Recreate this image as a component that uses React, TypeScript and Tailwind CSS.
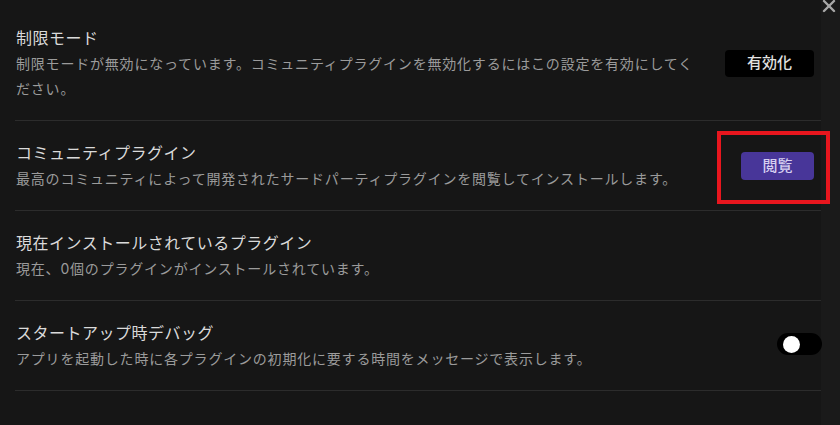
const FONT = "font-['Inter','Noto_Sans_CJK_JP',sans-serif]"

type Row = {
  name: string
  desc: string
  control: 'enable' | 'browse' | 'none' | 'toggle'
}

const ROWS: Row[] = [
  {
    name: '制限モード',
    desc: '制限モードが無効になっています。コミュニティプラグインを無効化するにはこの設定を有効にしてください。',
    control: 'enable',
  },
  {
    name: 'コミュニティプラグイン',
    desc: '最高のコミュニティによって開発されたサードパーティプラグインを閲覧してインストールします。',
    control: 'browse',
  },
  {
    name: '現在インストールされているプラグイン',
    desc: '現在、0個のプラグインがインストールされています。',
    control: 'none',
  },
  {
    name: 'スタートアップ時デバッグ',
    desc: 'アプリを起動した時に各プラグインの初期化に要する時間をメッセージで表示します。',
    control: 'toggle',
  },
]

function Control({ kind }: { kind: Row['control'] }) {
  if (kind === 'enable') {
    return (
      <button className="mr-[7px] h-[27px] w-[89px] rounded-[4px] bg-black text-[15px] font-medium text-[#e2e2e2]">
        有効化
      </button>
    )
  }
  if (kind === 'browse') {
    return (
      <div className="relative mr-[7px]">
        <button className="h-[28px] w-[73px] rounded-[4px] bg-[#483699] text-[15px] font-medium text-[#d6cff0]">
          閲覧
        </button>
        {/* annotation frame */}
        <div className="pointer-events-none absolute left-[-24px] top-[-21px] h-[73px] w-[113px] border-[4px] border-[#e8161e]" />
      </div>
    )
  }
  if (kind === 'toggle') {
    return (
      <div className="mr-[-1px] mt-[-4px] flex h-[22px] w-[45px] items-center rounded-full bg-black pl-[6px]">
        <span className="h-[17px] w-[17px] rounded-full bg-white" />
      </div>
    )
  }
  return null
}

export default function App() {
  return (
    <div className={`relative flex h-[425px] w-[840px] overflow-hidden bg-[#1a1a1a] ${FONT}`}>
      <main className="w-[821px] bg-[#161616] pl-[15px] pt-[6px]">
        {ROWS.map((r) => (
          <div key={r.name} className="flex items-center gap-5 border-b border-[#2c2c2c] pb-[19px] pt-5">
            <div className="flex-1 pl-px">
              <div className="text-[16px] leading-[25px] tracking-[0.5px] text-[#dadada]">{r.name}</div>
              <div className="max-w-[684px] text-[14px] leading-[25px] tracking-[0.8px] text-[#9b9b9b]">{r.desc}</div>
            </div>
            <Control kind={r.control} />
          </div>
        ))}
      </main>
      <div className="flex-1" />

      {/* close */}
      <svg className="absolute right-[4px] top-[-1px] h-[14px] w-[14px] text-[#a8a8a8]" viewBox="0 0 14 14" fill="none" stroke="currentColor" strokeWidth={2.4} strokeLinecap="round">
        <line x1="2" y1="2" x2="12" y2="12" />
        <line x1="12" y1="2" x2="2" y2="12" />
      </svg>
    </div>
  )
}
